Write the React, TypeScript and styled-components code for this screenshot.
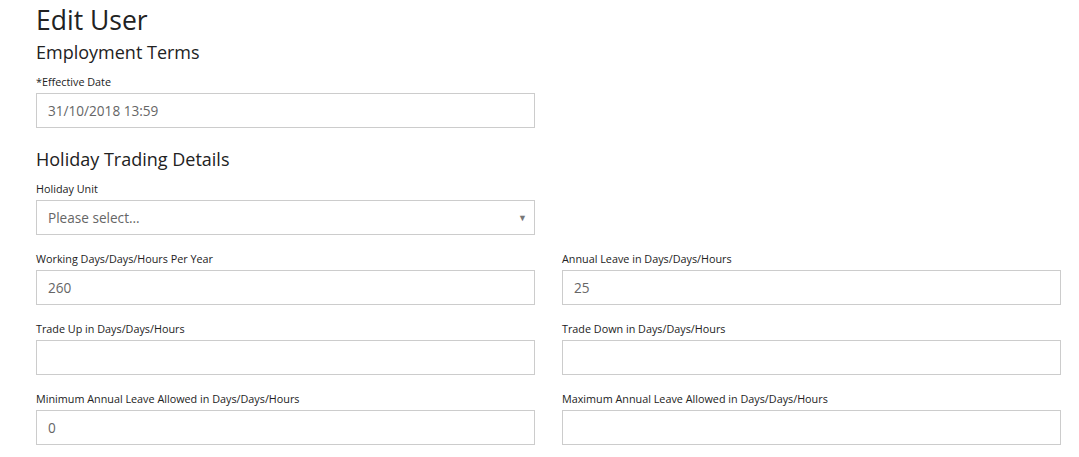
import React from "react";
import styled, { createGlobalStyle } from "styled-components";

const GlobalStyle = createGlobalStyle`
  html, body {
    margin: 0;
    padding: 0;
    background: #fff;
  }
  body {
    font-family: "Open Sans", "Liberation Sans", sans-serif;
    color: #222;
  }
`;

const Page = styled.div`
  padding: 5px 0 0 36px;
`;

const Title = styled.h1`
  margin: 0;
  font-size: 26.5px;
  line-height: 31px;
  font-weight: 400;
  color: #222;
`;

const SectionTitle = styled.h2<{ $top: number }>`
  margin: ${(p) => p.$top}px 0 0;
  font-size: 18px;
  line-height: 23px;
  font-weight: 400;
  color: #222;
`;

const FieldGrid = styled.div`
  display: grid;
  grid-template-columns: 499px 499px;
  column-gap: 27px;
  row-gap: 15px;
  margin-top: 9px;
`;

const Field = styled.div`
  display: flex;
  flex-direction: column;
  gap: 2px;
`;

const Label = styled.label`
  font-size: 10.8px;
  line-height: 18px;
  color: #222;
`;

const Input = styled.input`
  box-sizing: border-box;
  width: 100%;
  height: 35px;
  padding: 0 11px;
  border: 1px solid #ccc;
  border-radius: 0;
  font-family: inherit;
  font-size: 13.6px;
  color: #666;
  background: #fff;
  outline: none;
`;

const SelectBox = styled.div`
  box-sizing: border-box;
  height: 35px;
  border: 1px solid #ccc;
  display: flex;
  align-items: center;
  padding: 0 11px;
  font-size: 13.6px;
  color: #666;
`;

const Caret = styled.span`
  margin-left: auto;
  font-size: 9px;
  color: #777;
  margin-right: -4px;
`;

type FieldDef = { label: string; value?: string };

const rows: FieldDef[] = [
  { label: "Working Days/Days/Hours Per Year", value: "260" },
  { label: "Annual Leave in Days/Days/Hours", value: "25" },
  { label: "Trade Up in Days/Days/Hours" },
  { label: "Trade Down in Days/Days/Hours" },
  { label: "Minimum Annual Leave Allowed in Days/Days/Hours", value: "0" },
  { label: "Maximum Annual Leave Allowed in Days/Days/Hours" },
];

export default function App() {
  return (
    <Page>
      <GlobalStyle />
      <Title>Edit User</Title>
      <SectionTitle $top={5}>Employment Terms</SectionTitle>
      <FieldGrid>
        <Field>
          <Label>*Effective Date</Label>
          <Input defaultValue="31/10/2018 13:59" />
        </Field>
      </FieldGrid>
      <SectionTitle $top={20}>Holiday Trading Details</SectionTitle>
      <FieldGrid>
        <Field>
          <Label>Holiday Unit</Label>
          <SelectBox>
            Please select...
            <Caret>▼</Caret>
          </SelectBox>
        </Field>
        <div />
        {rows.map((r) => (
          <Field key={r.label}>
            <Label>{r.label}</Label>
            <Input defaultValue={r.value ?? ""} />
          </Field>
        ))}
      </FieldGrid>
    </Page>
  );
}
